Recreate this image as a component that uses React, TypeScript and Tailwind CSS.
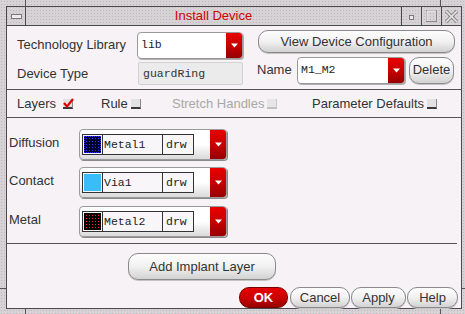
import React from "react";

const pill =
  "flex items-center justify-center rounded-[10px] border border-[#8a8a8a] bg-gradient-to-b from-[#fdfdfd] via-[#f1f1f1] to-[#d2d2d2] text-[13px] text-[#333] shadow-[0_1px_0_#c4c4c4]";

function Arrow() {
  return (
    <svg width="7" height="5" viewBox="0 0 7 5">
      <polygon points="0,0.5 7,0.5 3.5,4.5" fill="#ffffff" />
    </svg>
  );
}

function RedDrop({ w }: { w: string }) {
  return (
    <div
      className={`flex h-full items-center justify-center bg-gradient-to-b from-[#e80000] via-[#c80000] to-[#960000] ${w}`}
    >
      <Arrow />
    </div>
  );
}

function TextCombo({ value, width }: { value: string; width: string }) {
  return (
    <div
      className={`flex h-[27px] items-center overflow-hidden rounded-[4px] border border-[#9a9a9a] bg-white shadow-[1px_1px_0_#b0b0b0] ${width}`}
    >
      <span className="flex-1 pl-[3px] font-['Liberation_Mono',monospace] text-[11.5px] text-[#222]">
        {value}
      </span>
      <RedDrop w="w-[16px]" />
    </div>
  );
}

function Check({ on, dim }: { on?: boolean; dim?: boolean }) {
  return (
    <div className="relative h-[10px] w-[10px]">
      <div
        className={
          dim
            ? "h-full w-full border-r border-b-2 border-r-[#c8c8c8] border-b-[#c0c0c0] bg-[#e6e6e6]"
            : "h-full w-full border-r border-b-2 border-r-[#8a8a8a] border-b-[#3a3a3a] bg-[#e2e2e2]"
        }
      />
      {on && (
        <svg className="absolute -top-[1px] left-0" width="11" height="10" viewBox="0 0 11 10">
          <path d="M1 5 L4 8.5 L10 1" fill="none" stroke="#dd0000" strokeWidth="2.2" />
        </svg>
      )}
    </div>
  );
}

type Layer = { label: string; name: string; swatch: string };

const layers: Layer[] = [
  {
    label: "Diffusion",
    name: "Metal1",
    swatch:
      "border border-dotted border-[#2a2aff] bg-[#00002e] bg-[radial-gradient(circle,#3030ff_0.8px,transparent_1px)] bg-[length:3px_3px]",
  },
  { label: "Contact", name: "Via1", swatch: "bg-[#38bdf8]" },
  {
    label: "Metal",
    name: "Metal2",
    swatch:
      "border border-black bg-black bg-[radial-gradient(circle,#ff2020_0.8px,transparent_1px)] bg-[length:3px_3px]",
  },
];

function LayerCombo({ layer }: { layer: Layer }) {
  return (
    <div className="flex h-[31px] w-[148px] items-center overflow-hidden rounded-[4px] border border-[#9a9a9a] bg-gradient-to-b from-white via-white to-[#dadada] shadow-[1px_1px_0_#8a8a8a]">
      <div className="ml-[2px] flex h-[21px] w-[112px] border border-[#333] bg-[#f8f6f8] font-['Liberation_Mono',monospace] text-[11.5px] text-[#222]">
        <div className="flex w-[20px] items-center justify-center border-r border-[#333]">
          <div className={`h-[17px] w-[17px] ${layer.swatch}`} />
        </div>
        <div className="flex w-[60px] items-center border-r border-[#333] pl-[1px]">{layer.name}</div>
        <div className="flex flex-1 items-center pl-[3px]">drw</div>
      </div>
      <div className="flex-1" />
      <RedDrop w="w-[16px]" />
    </div>
  );
}

export default function App() {
  return (
    <div className="relative h-[314px] w-[465px] bg-[#d5d3d5] bg-[radial-gradient(circle,#c6b4b8_0.6px,transparent_0.8px)] bg-[length:3px_3px] pt-[6px] pr-[3px] pb-[5px] pl-[6px] font-['Liberation_Sans',Arial,sans-serif]">
      {/* frame corner notches */}
      <div className="absolute top-0 left-[25px] h-[6px] w-px bg-[#555]" />
      <div className="absolute top-0 left-[440px] h-[6px] w-px bg-[#555]" />
      <div className="absolute bottom-0 left-[25px] h-[5px] w-px bg-[#555]" />
      <div className="absolute bottom-0 left-[440px] h-[5px] w-px bg-[#555]" />
      <div className="absolute top-[288px] left-0 h-px w-[6px] bg-[#555]" />
      <div className="absolute top-[288px] right-0 h-px w-[3px] bg-[#555]" />

      <div className="flex h-full flex-col border border-[#4a4a4a]">
        {/* title bar */}
        <div className="flex h-[19px] border-b border-[#4a4a4a]">
          <div className="flex w-[19px] items-center justify-center border-r border-[#4a4a4a]">
            <svg width="11" height="5" viewBox="0 0 11 5">
              <rect x="0.5" y="0.5" width="10" height="4" fill="#ececec" stroke="#7a7a7a" />
            </svg>
          </div>
          <div className="flex flex-1 items-center justify-center text-[13px] text-[#d00000]">
            Install Device
          </div>
          <div className="flex w-[20px] items-end justify-center border-l border-[#4a4a4a] pb-[5px]">
            <svg width="5" height="5" viewBox="0 0 5 5">
              <rect x="0.5" y="0.5" width="4" height="4" fill="#eaeaea" stroke="#7a7a7a" />
            </svg>
          </div>
          <div className="flex w-[20px] items-center justify-center border-l border-[#4a4a4a]">
            <svg width="11" height="12" viewBox="0 0 11 12">
              <rect x="0.5" y="0.5" width="10" height="11" fill="none" stroke="#8a8a8a" />
              <path d="M1 1 H10 M1 1 V11" stroke="#f2f2f2" />
            </svg>
          </div>
          <div className="flex w-[20px] items-center justify-center border-l border-[#4a4a4a]">
            <svg width="15" height="15" viewBox="0 0 15 15">
              <path d="M2 2 L13 13 M13 2 L2 13" stroke="#8a8a8a" strokeWidth="3.4" />
              <path d="M2 2 L13 13 M13 2 L2 13" stroke="#e4e4e4" strokeWidth="1.6" />
            </svg>
          </div>
        </div>

        {/* content */}
        <div className="flex flex-1 flex-col bg-[#f6f2f6] text-[13px] text-[#333]">
          <div className="flex h-[64px] border-b border-[#555]">
            <div className="flex w-[251px] flex-col pt-[6px] pl-[10px]">
              <div className="flex h-[26px] items-center">
                <span className="w-[120px]">Technology Library</span>
                <TextCombo value="lib" width="w-[106px] h-[26px]" />
              </div>
              <div className="mt-[4px] flex h-[23px] items-center">
                <span className="w-[121px]">Device Type</span>
                <div className="flex h-[23px] w-[105px] items-center rounded-[2px] border border-[#d2d2d2] bg-[#ebebeb] pl-[4px] font-['Liberation_Mono',monospace] text-[11.5px] text-[#333]">
                  guardRing
                </div>
              </div>
            </div>
            <div className="flex flex-col pt-[4px]">
              <button className={`${pill} h-[23px] w-[197px]`}>View Device Configuration</button>
              <div className="mt-[3px] flex h-[28px] items-center">
                <span className="-ml-px w-[40px]">Name</span>
                <TextCombo value="M1_M2" width="w-[108px]" />
                <button className={`${pill} ml-[4px] h-[27px] w-[45px] rounded-[9px]`}>Delete</button>
              </div>
            </div>
          </div>

          <div className="flex h-[28px] items-center border-b border-[#555] pl-[10px]">
            <div className="flex w-[84px] items-center">
              <span className="w-[46px]">Layers</span>
              <Check on />
            </div>
            <div className="flex w-[71px] items-center">
              <span className="w-[30px]">Rule</span>
              <Check />
            </div>
            <div className="flex w-[140px] items-center">
              <span className="w-[95px] text-[#a8a8a8]">Stretch Handles</span>
              <Check dim />
            </div>
            <div className="flex items-center">
              <span className="w-[115px]">Parameter Defaults</span>
              <Check />
            </div>
          </div>

          <div className="flex h-[125px] flex-col pt-[11px]">
            {layers.map((l, i) => (
              <div
                key={l.label}
                className={`flex items-center ${i === 1 ? "mt-[7px]" : i === 2 ? "mt-[8px]" : ""}`}
              >
                <span className="-mt-[4px] w-[72px] pl-[2px]">{l.label}</span>
                <LayerCombo layer={l} />
              </div>
            ))}
          </div>
          <div className="mr-[4px] h-px bg-[#555]" />

          <div className="flex flex-1 flex-col">
            <button className={`${pill} mt-[9px] ml-[121px] h-[27px] w-[148px]`}>Add Implant Layer</button>
            <div className="mt-[7px] flex h-[21px] justify-end pr-[3px]">
              <button className="flex w-[49px] items-center justify-center rounded-[10px] border border-[#7a0000] bg-gradient-to-b from-[#e60000] via-[#cc0000] to-[#980000] text-[13px] font-bold text-white">
                OK
              </button>
              <button className={`${pill} ml-[2px] w-[60px]`}>Cancel</button>
              <button className={`${pill} ml-[1px] w-[55px]`}>Apply</button>
              <button className={`${pill} ml-[1px] w-[51px]`}>Help</button>
            </div>
          </div>
        </div>
      </div>
    </div>
  );
}
